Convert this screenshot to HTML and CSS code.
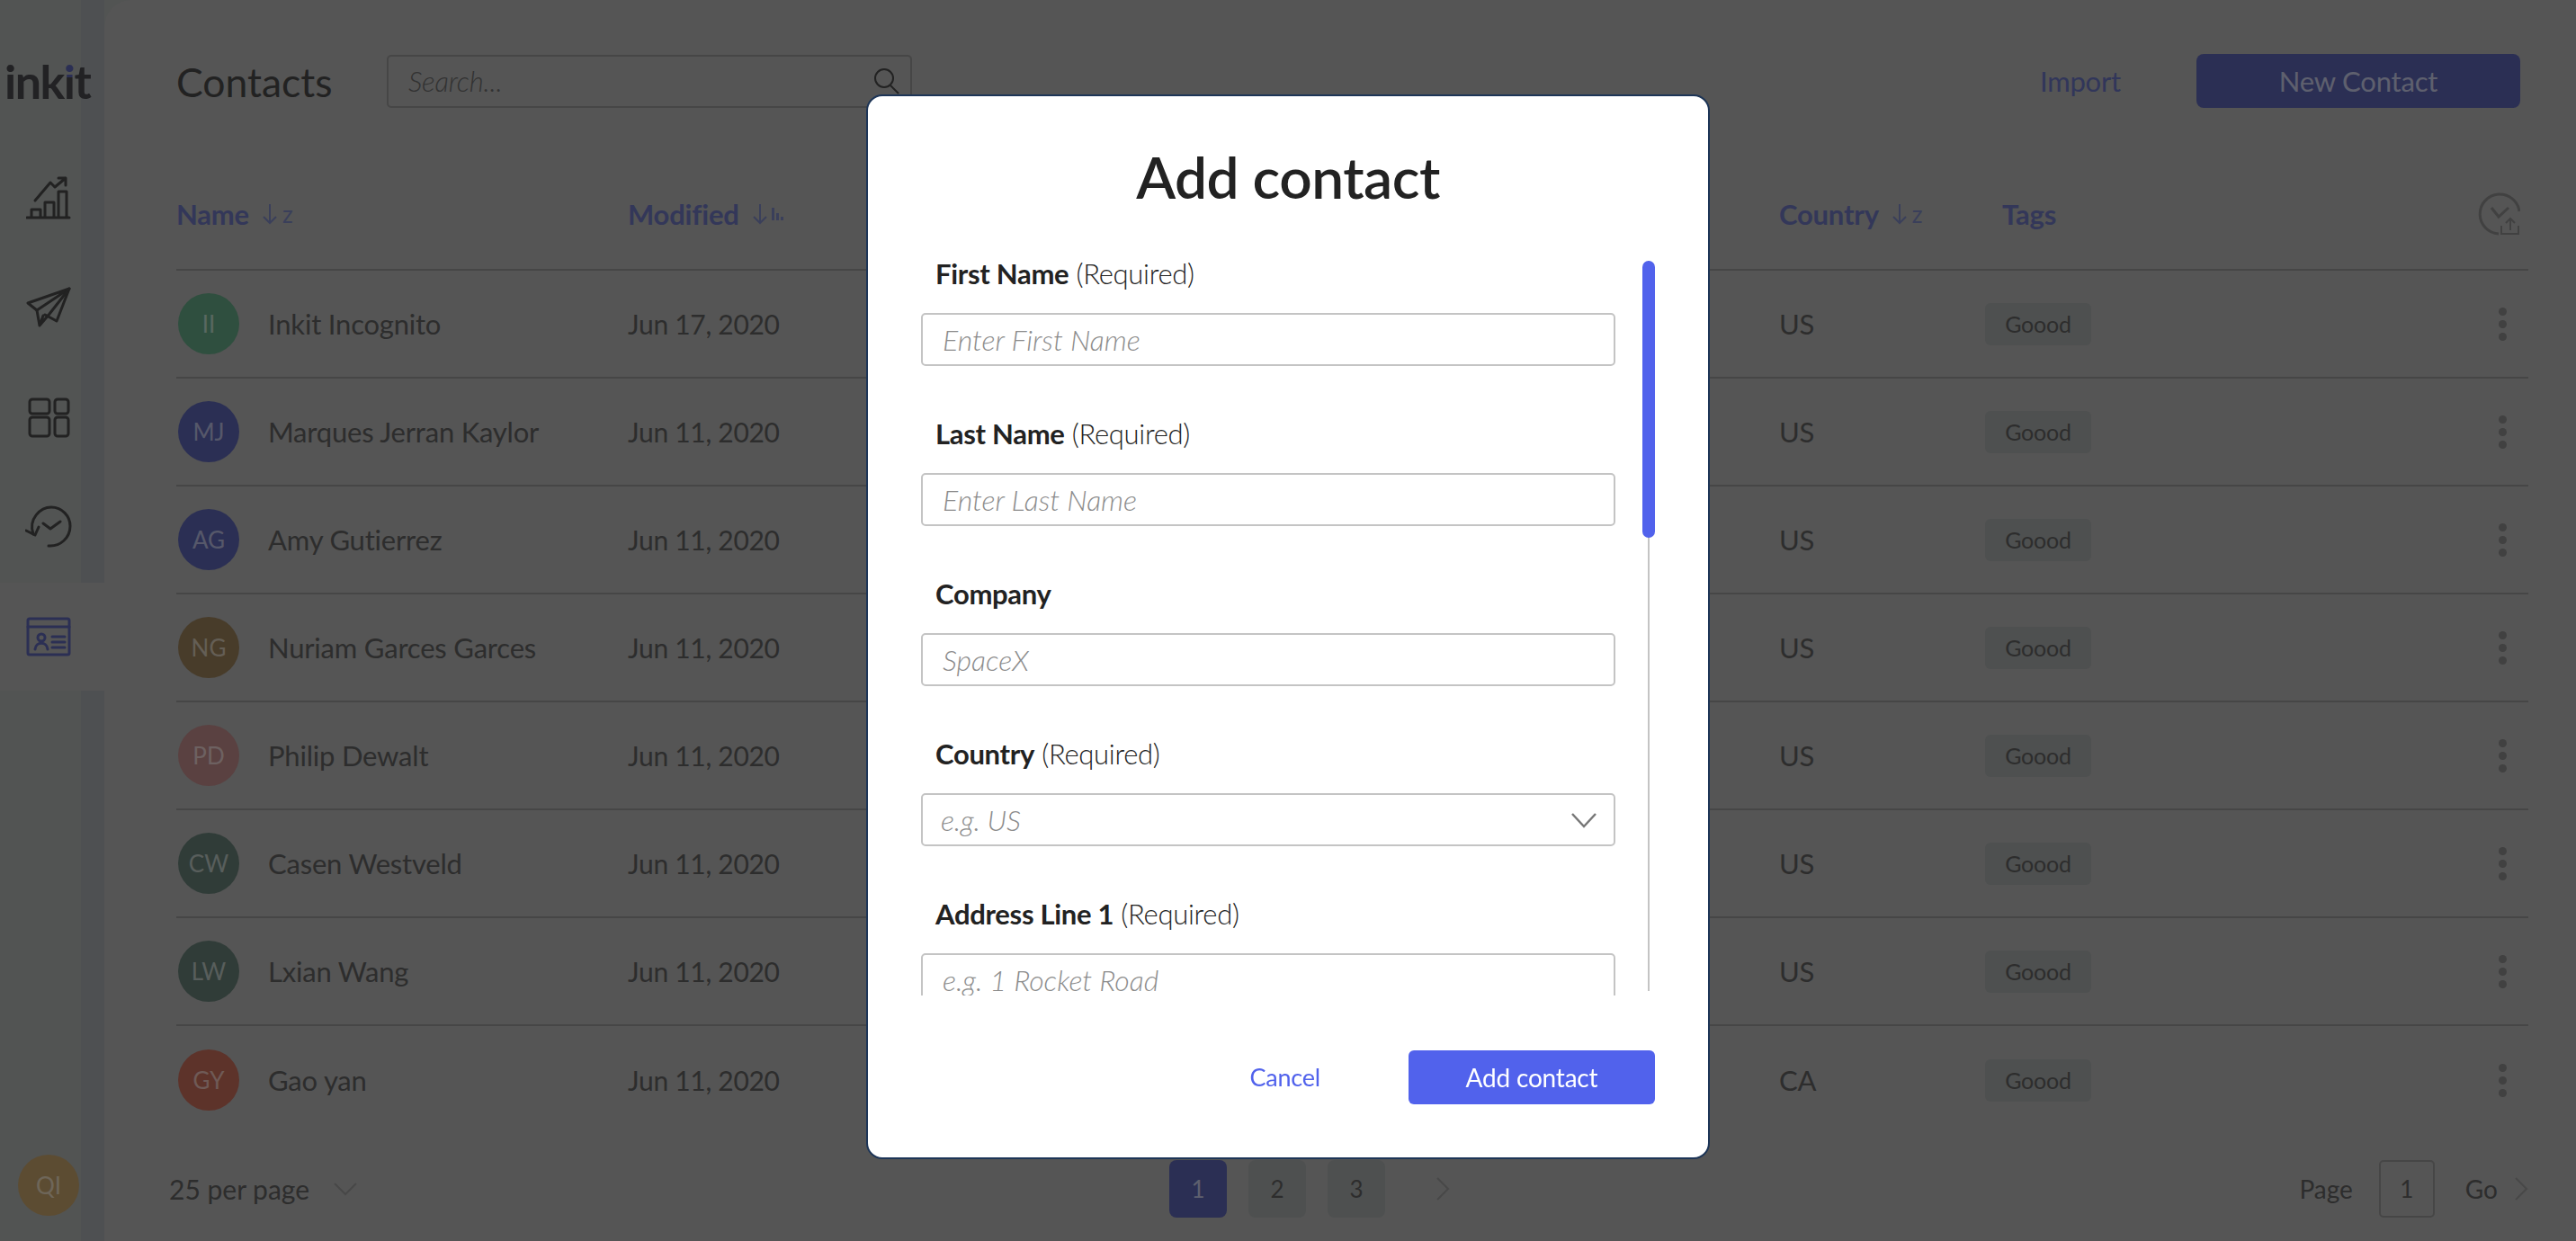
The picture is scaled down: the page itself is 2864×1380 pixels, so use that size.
FILE: index.html
```html
<!DOCTYPE html>
<html lang="en">
<head>
    <meta charset="UTF-8">
    <title>Contacts</title>
    <link rel="stylesheet" href="styles.css">
</head>

<body>
    <div class="app">
        <aside class="sidebar">
            <div class="logo">ink<span class="logo-i">i</span>t</div>
            <nav class="nav">
                <a class="nav-item" href="#">
                    <svg width="50" height="50" viewBox="0 0 50 50" class="icon">
                        <path d="M1 47h47M6 47v-9h10v9M21 47V30h10v17M36 47V18h9v29"/>
                        <path d="M10 28L27 8l5 5L44 3M36 3h8v8"/>
                    </svg>
                </a>
                <a class="nav-item" href="#">
                    <svg width="50" height="50" viewBox="0 0 50 50" class="icon">
                        <path d="M2 20L48 4 34 40 21 33M2 20l10 8L48 4"/>
                        <path d="M12 28l3 17 11-13L48 4M15 45l4-11"/>
                    </svg>
                </a>
                <a class="nav-item" href="#">
                    <svg width="50" height="50" viewBox="0 0 50 50" class="icon">
                        <rect x="4" y="5" width="22" height="16" rx="3"/>
                        <rect x="32" y="5" width="15" height="16" rx="3"/>
                        <rect x="4" y="25" width="22" height="21" rx="3"/>
                        <rect x="32" y="25" width="15" height="21" rx="3"/>
                    </svg>
                </a>
                <a class="nav-item" href="#">
                    <svg width="52" height="50" viewBox="0 0 52 50" class="icon">
                        <path d="M9 33C3 16 17 3 29 3c12 0 21 10 21 21 0 13-11 23-24 22"/>
                        <path d="M1 29l10 5 4-9M20 21l8 6 11-8"/>
                    </svg>
                </a>
                <a class="nav-item nav-item-active" href="#">
                    <svg width="50" height="46" viewBox="0 0 50 46" class="icon icon-active">
                        <rect x="2" y="3" width="46" height="40" rx="2"/>
                        <path d="M2 12h46M29 23h14M29 29h14M29 35h14M10 37c1-9 13-9 14 0"/>
                        <circle cx="17" cy="24" r="4"/>
                    </svg>
                </a>
            </nav>
            <div class="avatar avatar-user">QI</div>
        </aside>

        <main class="panel">
            <header class="topbar">
                <h1 class="page-title">Contacts</h1>
                <div class="search">
                    <span class="search-text">Search...</span>
                    <svg width="32" height="32" viewBox="0 0 32 32" class="search-icon">
                        <circle cx="13" cy="13" r="10"/>
                        <path d="M20 21l9 9"/>
                    </svg>
                </div>
                <a class="import-link" href="#">Import</a>
                <a class="new-btn" href="#">New Contact</a>
            </header>

            <div class="table-row table-head">
                <div class="th">Name <svg class="sort" width="18" height="24" viewBox="0 0 18 24"><path d="M9 1v21M2 15l7 7 7-7"/></svg><span class="sort-z">z</span></div>
                <div class="th">Modified <svg class="sort" width="18" height="24" viewBox="0 0 18 24"><path d="M9 1v21M2 15l7 7 7-7"/></svg><span class="bars"><i></i><i></i><i></i></span></div>
                <div class="th">Country <svg class="sort" width="18" height="24" viewBox="0 0 18 24"><path d="M9 1v21M2 15l7 7 7-7"/></svg><span class="sort-z">z</span></div>
                <div class="th th-tags">Tags</div>
                <svg class="sync" width="48" height="48" viewBox="0 0 48 48">
                    <path d="M24 46A22 22 0 1 1 47 21M16 17l8 10 11-10"/>
                    <path d="M37 42V29M32 34l5-5 5 5M27 37v9h19v-9" class="sync-thin"/>
                </svg>
            </div>

            <div class="table-row">
                <div class="name-cell"><span class="avatar avatar-green">II</span>Inkit Incognito</div>
                <div class="date">Jun 17, 2020</div><div>US</div><div><span class="chip">Goood</span></div><div class="more"><i></i><i></i><i></i></div>
            </div>
            <div class="table-row">
                <div class="name-cell"><span class="avatar avatar-blue">MJ</span>Marques Jerran Kaylor</div>
                <div class="date">Jun 11, 2020</div><div>US</div><div><span class="chip">Goood</span></div><div class="more"><i></i><i></i><i></i></div>
            </div>
            <div class="table-row">
                <div class="name-cell"><span class="avatar avatar-blue">AG</span>Amy Gutierrez</div>
                <div class="date">Jun 11, 2020</div><div>US</div><div><span class="chip">Goood</span></div><div class="more"><i></i><i></i><i></i></div>
            </div>
            <div class="table-row">
                <div class="name-cell"><span class="avatar avatar-gold">NG</span>Nuriam Garces Garces</div>
                <div class="date">Jun 11, 2020</div><div>US</div><div><span class="chip">Goood</span></div><div class="more"><i></i><i></i><i></i></div>
            </div>
            <div class="table-row">
                <div class="name-cell"><span class="avatar avatar-pink">PD</span>Philip Dewalt</div>
                <div class="date">Jun 11, 2020</div><div>US</div><div><span class="chip">Goood</span></div><div class="more"><i></i><i></i><i></i></div>
            </div>
            <div class="table-row">
                <div class="name-cell"><span class="avatar avatar-teal">CW</span>Casen Westveld</div>
                <div class="date">Jun 11, 2020</div><div>US</div><div><span class="chip">Goood</span></div><div class="more"><i></i><i></i><i></i></div>
            </div>
            <div class="table-row">
                <div class="name-cell"><span class="avatar avatar-teal">LW</span>Lxian Wang</div>
                <div class="date">Jun 11, 2020</div><div>US</div><div><span class="chip">Goood</span></div><div class="more"><i></i><i></i><i></i></div>
            </div>
            <div class="table-row table-row-last">
                <div class="name-cell"><span class="avatar avatar-red">GY</span>Gao yan</div>
                <div class="date">Jun 11, 2020</div><div>CA</div><div><span class="chip">Goood</span></div><div class="more"><i></i><i></i><i></i></div>
            </div>

            <footer class="pager">
                <div class="per-page">25 per page
                    <svg width="28" height="16" viewBox="0 0 28 16" class="chev"><path d="M2 2l12 12L26 2"/></svg>
                </div>
                <div class="pages">
                    <a class="page page-on" href="#">1</a>
                    <a class="page" href="#">2</a>
                    <a class="page" href="#">3</a>
                    <svg width="16" height="28" viewBox="0 0 16 28" class="chev page-next"><path d="M2 2l12 12L2 26"/></svg>
                </div>
                <div class="page-jump">
                    <span>Page</span>
                    <span class="page-box">1</span>
                    <span>Go</span>
                    <svg width="16" height="28" viewBox="0 0 16 28" class="chev"><path d="M2 2l12 12L2 26"/></svg>
                </div>
            </footer>
        </main>
    </div>

    <div class="overlay">
        <div class="modal">
            <h2 class="modal-title">Add contact</h2>
            <div class="modal-body">
                <form class="fields">
                    <div class="field">
                        <label class="field-label"><b>First Name</b> (Required)</label>
                        <input class="input" placeholder="Enter First Name">
                    </div>
                    <div class="field">
                        <label class="field-label"><b>Last Name</b> (Required)</label>
                        <input class="input" placeholder="Enter Last Name">
                    </div>
                    <div class="field">
                        <label class="field-label"><b>Company</b></label>
                        <input class="input" placeholder="SpaceX">
                    </div>
                    <div class="field">
                        <label class="field-label"><b>Country</b> (Required)</label>
                        <div class="select">
                            <span class="select-text">e.g. US</span>
                            <svg width="30" height="18" viewBox="0 0 30 18" class="select-chev"><path d="M2 2l13 14L28 2"/></svg>
                        </div>
                    </div>
                    <div class="field">
                        <label class="field-label"><b>Address Line 1</b> (Required)</label>
                        <input class="input" placeholder="e.g. 1 Rocket Road">
                    </div>
                </form>
                <div class="scrollbar"><div class="scroll-thumb"></div></div>
            </div>
            <div class="modal-actions">
                <a class="cancel" href="#">Cancel</a>
                <a class="add-btn" href="#">Add contact</a>
            </div>
        </div>
    </div>
</body>
</html>
```

FILE: styles.css
```css
* {
    box-sizing: border-box;
}

html,
body {
    margin: 0;
    height: 100%;
    overflow: hidden;
}

body {
    font-family: 'Lato', 'Liberation Sans', sans-serif;
    font-size: 31px;
    letter-spacing: -0.2px;
    color: #545454;
    background: #a5a5a5;
}

a {
    text-decoration: none;
}

.app {
    display: flex;
    height: 1380px;
    background: #9fa3a1;
}

/* sidebar */
.sidebar {
    width: 116px;
    flex: none;
    display: flex;
    flex-direction: column;
    align-items: center;
    background: linear-gradient(to right, #9fa3a1 0, #9fa3a1 90px, #989c9f 90px);
}

.logo {
    height: 60px;
    margin-top: 60px;
    width: 116px;
    padding-left: 5px;
    font-size: 52px;
    font-weight: 700;
    line-height: 60px;
    letter-spacing: -1.5px;
    color: #3d3d42;
}

.logo-i {
    background: linear-gradient(#5159a3 0, #5159a3 44%, #3d3d42 44%);
    -webkit-background-clip: text;
    background-clip: text;
    color: transparent;
}

.nav {
    display: flex;
    flex-direction: column;
    gap: 2px;
    margin-top: 40px;
    width: 100%;
}

.nav-item {
    height: 120px;
    padding-right: 8px;
    display: flex;
    align-items: center;
    justify-content: center;
}

.nav-item-active {
    background: #a5a5a5;
}

.icon {
    fill: none;
    stroke: #3d3d3d;
    stroke-width: 3;
    stroke-linejoin: round;
    stroke-linecap: round;
}

.icon-active {
    stroke: #5159a3;
}

.avatar {
    width: 68px;
    height: 68px;
    flex: none;
    border-radius: 50%;
    display: flex;
    align-items: center;
    justify-content: center;
    font-size: 26px;
    letter-spacing: 0;
    color: rgba(255, 255, 255, 0.5);
}

.avatar-user {
    margin-top: auto;
    margin-right: 8px;
    margin-bottom: 28px;
    background: #b4935e;
}

.avatar-green { background: #589978; }
.avatar-blue { background: #5159a3; }
.avatar-gold { background: #8b724e; }
.avatar-pink { background: #af7c7c; }
.avatar-teal { background: #5a726a; }
.avatar-red { background: #b5604f; }

/* main panel */
.panel {
    flex: 1;
    background: #a5a5a5;
    border-top-left-radius: 30px;
    padding: 60px 53px 0 80px;
    display: flex;
    flex-direction: column;
}

.topbar {
    display: flex;
    align-items: center;
    height: 60px;
}

.page-title {
    margin: 0;
    width: 234px;
    font-size: 44.5px;
    font-weight: 400;
    letter-spacing: 0;
    color: #3d3d3d;
}

.search {
    width: 584px;
    height: 59px;
    border: 2px solid #878787;
    border-radius: 5px;
    padding: 0 10px 0 22px;
    display: flex;
    align-items: center;
    justify-content: space-between;
}

.search-text {
    font-style: italic;
    font-weight: 300;
    color: #5e5e5e;
}

.search-icon {
    fill: none;
    stroke: #3d3d3d;
    stroke-width: 2;
}

.import-link {
    margin-left: auto;
    color: #5c66b0;
}

.new-btn {
    margin-left: 84px;
    margin-right: 9px;
    width: 360px;
    height: 60px;
    border-radius: 8px;
    background: #5159a3;
    color: rgba(255, 255, 255, 0.6);
    display: flex;
    align-items: center;
    justify-content: center;
}

/* table */
.table-row {
    display: grid;
    grid-template-columns: 502px 1280px 229px 1fr 44px;
    align-items: center;
    height: 120px;
    border-bottom: 2px solid #878787;
}

.table-row-last {
    border-bottom: 0;
}

.table-head {
    height: 121px;
    margin-top: 60px;
    padding-bottom: 4px;
    color: #6069ae;
    font-weight: 700;
}

.date {
    font-size: 30px;
    letter-spacing: -0.3px;
}

.th {
    display: flex;
    align-items: center;
}

.th-tags {
    padding-left: 19px;
}

.sort {
    margin-left: 14px;
    fill: none;
    stroke: #6f79b0;
    stroke-width: 2;
}

.sort-z {
    margin-left: 5px;
    font-size: 26px;
    font-weight: 400;
    color: #6f79b0;
}

.bars {
    display: flex;
    align-items: flex-end;
    gap: 2px;
    height: 14px;
    margin-left: 4px;
}

.bars i {
    width: 3px;
    height: 14px;
    background: #6f79b0;
}

.bars i:nth-child(2) { height: 8px; }
.bars i:nth-child(3) { height: 4px; }

.sync {
    justify-self: end;
    margin-right: 9px;
    fill: none;
    stroke: #7c7c7c;
    stroke-width: 3;
}

.sync-thin {
    stroke-width: 2;
}

.name-cell {
    display: flex;
    align-items: center;
    gap: 32px;
    padding-left: 2px;
}

.chip {
    display: inline-flex;
    align-items: center;
    justify-content: center;
    width: 118px;
    height: 47px;
    border-radius: 6px;
    background: #979b9b;
    font-size: 25px;
}

.more {
    display: flex;
    flex-direction: column;
    align-items: center;
    gap: 5px;
    justify-self: start;
    width: 9px;
    margin-left: 11px;
}

.more i {
    width: 9px;
    height: 9px;
    border-radius: 50%;
    background: #7c7c7c;
}

/* footer */
.pager {
    display: flex;
    align-items: center;
    justify-content: space-between;
    height: 64px;
    margin-top: 29px;
    margin-left: -8px;
    font-size: 30px;
    letter-spacing: 0;
}

.per-page {
    width: 480px;
    display: flex;
    align-items: center;
    gap: 26px;
}

.chev {
    fill: none;
    stroke: #8b8b8b;
    stroke-width: 2;
}

.pages {
    display: flex;
    align-items: center;
    gap: 24px;
    margin-left: 632px;
    flex: 1;
}

.page {
    width: 64px;
    height: 64px;
    border-radius: 8px;
    background: #979b9b;
    color: #545454;
    display: flex;
    align-items: center;
    justify-content: center;
    font-size: 26px;
}

.page-on {
    background: #5159a3;
    color: rgba(255, 255, 255, 0.6);
}

.page-next {
    margin-left: 32px;
}

.page-jump {
    display: flex;
    align-items: center;
    gap: 18px;
    font-size: 28px;
}

.page-box {
    width: 62px;
    height: 64px;
    margin: 0 16px 0 11px;
    border: 2px solid #878787;
    border-radius: 5px;
    display: flex;
    align-items: center;
    justify-content: center;
    font-size: 26px;
}

/* modal */
.overlay {
    position: fixed;
    inset: 0;
    display: flex;
    justify-content: center;
    align-items: flex-start;
    padding-top: 105px;
    background: rgba(8, 8, 8, 0.51);
}

.modal {
    width: 938px;
    height: 1184px;
    background: #fff;
    border: 2px solid #1d3557;
    border-radius: 18px;
    display: flex;
    flex-direction: column;
    color: #222;
}

.modal-title {
    margin: 0;
    height: 172px;
    padding-top: 50px;
    text-align: center;
    font-size: 64px;
    font-weight: 600;
    line-height: 80px;
    letter-spacing: -0.5px;
}

.modal-body {
    display: flex;
    height: 828px;
    padding: 9px 0 0 59px;
    overflow: hidden;
}

.fields {
    width: 772px;
    flex: none;
}

.field {
    height: 178px;
    display: flex;
    flex-direction: column;
}

.field-label {
    height: 60px;
    padding-left: 16px;
    line-height: 33px;
    font-weight: 300;
    letter-spacing: -0.3px;
}

.field-label b {
    font-weight: 700;
}

.input,
.select {
    width: 100%;
    height: 59px;
    flex: none;
    border: 2px solid #c4c4c4;
    border-radius: 5px;
    background: #fff;
    padding: 0 22px;
    font: inherit;
    font-size: 32px;
    outline: none;
}

.input::placeholder,
.select-text {
    font-style: italic;
    font-weight: 300;
    color: #8c8c8c;
    opacity: 1;
}

.select {
    display: flex;
    align-items: center;
    justify-content: space-between;
    padding: 0 18px 0 20px;
}

.select-chev {
    fill: none;
    stroke: #777;
    stroke-width: 2.5;
}

.scrollbar {
    width: 14px;
    height: 812px;
    margin-top: 2px;
    margin-left: 30px;
    background: linear-gradient(#c4c4c4, #c4c4c4) center / 2px 100% no-repeat;
}

.scroll-thumb {
    height: 308px;
    border-radius: 7px;
    background: #5162ec;
}

.modal-actions {
    flex: 1;
    display: flex;
    align-items: flex-start;
    justify-content: flex-end;
    padding: 61px 59px 0 0;
}

.cancel {
    margin-top: 13px;
    margin-right: 98px;
    font-size: 27px;
    color: #5162ec;
}

.add-btn {
    width: 274px;
    height: 60px;
    border-radius: 6px;
    background: #5162ec;
    color: #fff;
    display: flex;
    align-items: center;
    justify-content: center;
    font-size: 28px;
}
```
